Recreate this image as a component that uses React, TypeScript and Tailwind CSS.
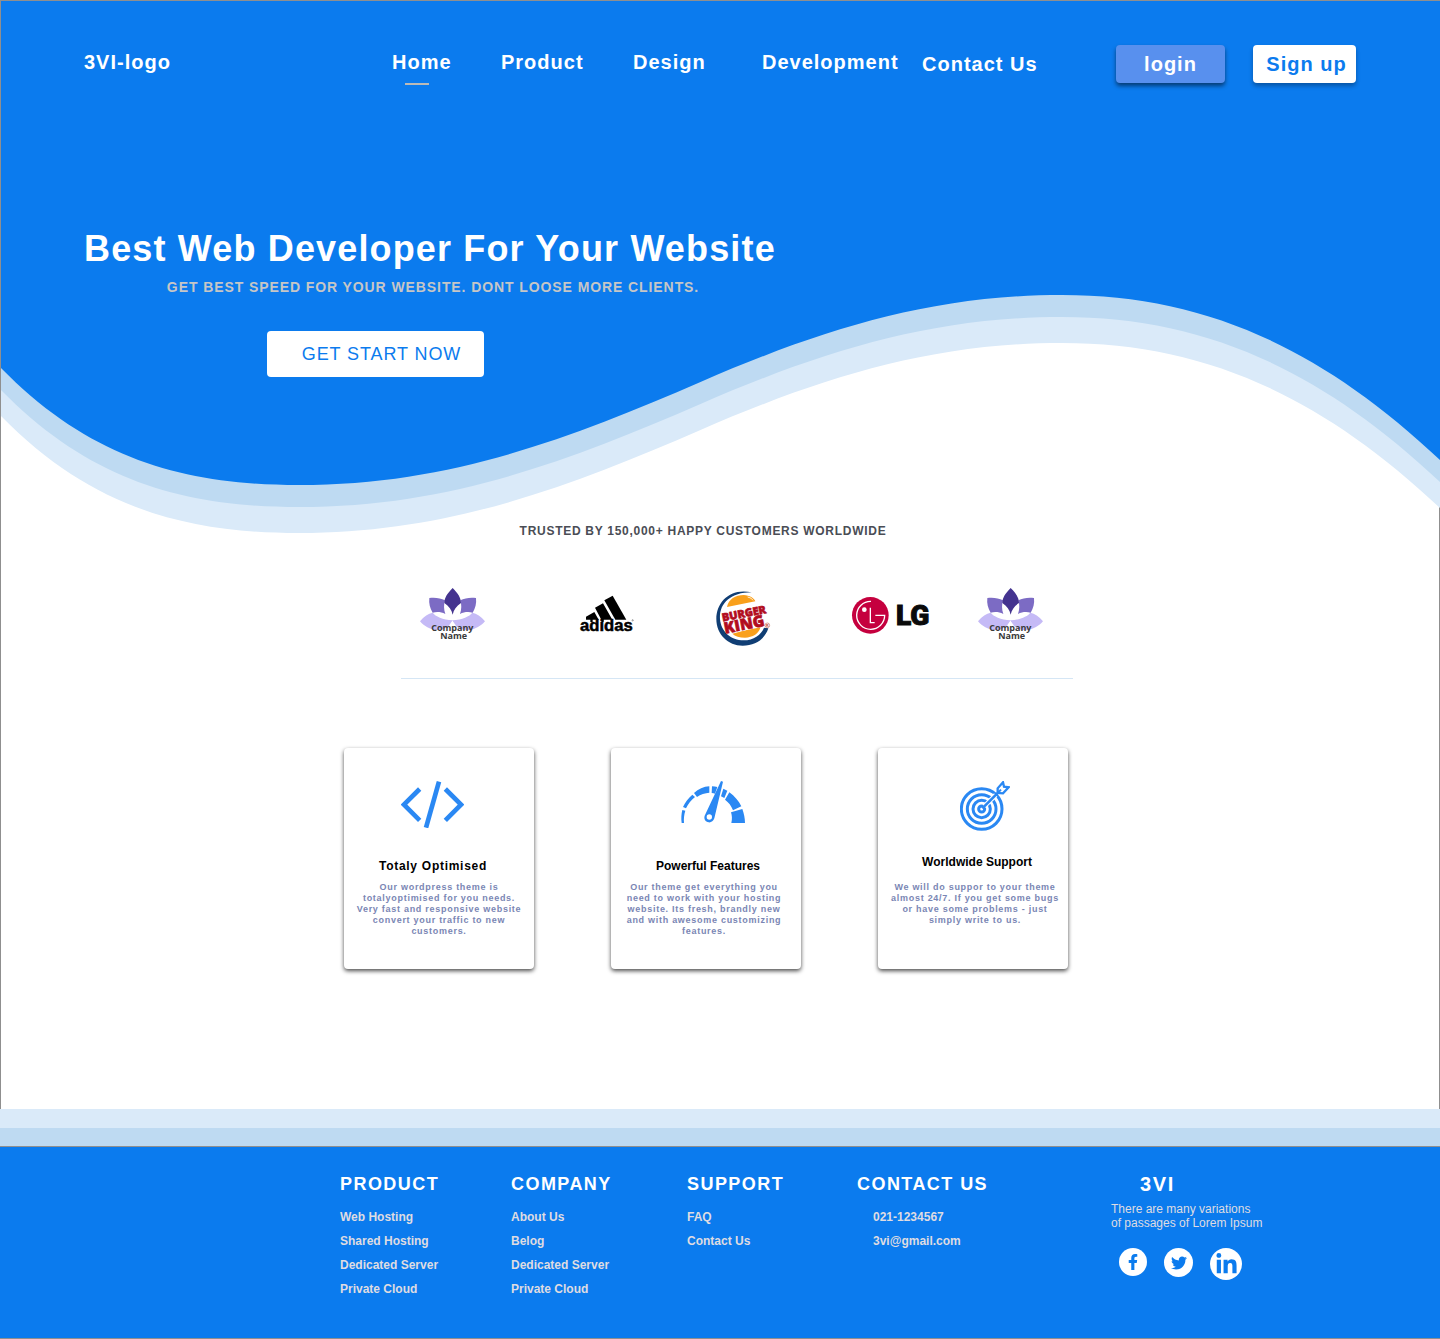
import type { ReactNode } from "react";
import { FaFacebookF, FaLinkedinIn, FaTwitter } from "react-icons/fa";

function HeroWave() {
  const curve =
    "C90 459 185 484 298 484 C450 484 570 437 700 381 C820 329 930 294 1062 294 C1200 294 1318 344 1440 459 V0 H0 Z";
  return (
    <svg
      className="pointer-events-none absolute inset-x-0 top-0 h-[540px] w-full"
      viewBox="0 0 1440 540"
      preserveAspectRatio="none"
      aria-hidden="true"
    >
      <path d={`M0 367 ${curve}`} fill="#daeaf9" transform="translate(0 48)" />
      <path d={`M0 367 ${curve}`} fill="#bedaf2" transform="translate(0 22)" />
      <path d={`M0 367 ${curve}`} fill="#0b7bee" />
      <rect width="1440" height="60" fill="#0b7bee" />
    </svg>
  );
}

function LotusLogo() {
  return (
    <svg className="h-[54px] w-[65px] overflow-visible" viewBox="60 54 195 162" role="img" aria-label="Company Name">
      <g fill="#c5baf6">
        <path d="M60 154C72 139 85 130 98 128C106 139 128 149 158 151C152 172 128 182 108 180C88 178 72 168 60 154Z" />
        <path d="M255 154C243 139 230 130 217 128C209 139 187 149 157 151C163 172 187 182 207 180C227 178 243 168 255 154Z" />
      </g>
      <g fill="#7c6bc4">
        <path d="M88 84C105 82 122 84 135 91C131 104 131 118 136 132C124 126 111 125 98 128C90 115 86 100 88 84Z" />
        <path d="M228 84C211 82 194 84 181 91C185 104 185 118 180 132C192 126 205 125 218 128C226 115 230 100 228 84Z" />
      </g>
      <path d="M158 54C142 70 133 84 133 99C147 108 155 120 158 134C161 120 169 108 183 99C183 84 174 70 158 54Z" fill="#44338f" />
      <path d="M157 152L146 168L157 163L169 168Z" fill="#fff" />
      <text fill="#3a3a3a" fontFamily="'Open Sans', 'Noto Sans', sans-serif" fontWeight="700" fontSize="27" textAnchor="middle">
        <tspan x="157" y="182">Company</tspan>
        <tspan x="161" y="206">Name</tspan>
      </text>
    </svg>
  );
}

function AdidasLogo() {
  return (
    <svg className="h-[40px] w-[54px] overflow-visible" viewBox="539 76 162 120" role="img" aria-label="adidas">
      <path d="M612 92L637 78L678 150H645Z" />
      <path d="M584 114L608 101L636 150H610V157H603V150Z" />
      <path d="M557 141L582 127L595 150H577V157H570V150H557Z" />
      <text
        x="618"
        y="185"
        fontFamily="'Liberation Sans', Arial, sans-serif"
        fontWeight="700"
        fontSize="50"
        textAnchor="middle"
        stroke="#000"
        strokeWidth="1.5"
      >
        adidas
      </text>
      <circle cx="697" cy="152" r="2" fill="none" stroke="#000" />
    </svg>
  );
}

function BurgerKingLogo() {
  return (
    <svg className="h-[55px] w-[54px] overflow-visible" viewBox="77 62 162 165" role="img" aria-label="Burger King">
      <path d="M184 66C118 52 78 96 78 146C78 192 113 226 157 226C195 226 224 206 234 174L221 172C212 194 190 210 160 210C122 210 92 184 89 146C86 102 118 66 184 66Z" fill="#103e74" />
      <path d="M110 110C114 86 136 74 160 74C178 75 191 83 195 93Z" fill="#f9a01b" />
      <path d="M172 80Q184 82 188 90" fill="none" stroke="#fff" strokeWidth="2.5" />
      <path d="M126 190L211 168C208 190 186 202 164 202C148 202 134 198 126 190Z" fill="#f9a01b" />
      <g fontFamily="'Open Sans', sans-serif" fontWeight="800" strokeLinejoin="round" transform="rotate(-11 100 153)">
        <rect x="100" y="126" width="110" height="66" fill="#fff" />
        <g fill="#b20d1e" stroke="#b20d1e" strokeWidth="2">
          <text x="97" y="153" fontSize="33">
            BURGER
          </text>
          <text x="97" y="190" fontSize="47">
            KING
          </text>
        </g>
      </g>
      <circle cx="231" cy="165" r="7" fill="none" stroke="#b8432f" strokeWidth="1.5" />
      <text x="231" y="169" fontSize="11" fontWeight="700" fontFamily="'Liberation Sans', sans-serif" textAnchor="middle" fill="#b8432f">
        R
      </text>
    </svg>
  );
}

function LgLogo() {
  return (
    <svg className="h-[37px] w-[79px] overflow-visible" viewBox="486 81 237 111" role="img" aria-label="LG">
      <circle cx="541" cy="136" r="55" fill="#c5003e" />
      <g fill="none" stroke="#fff" strokeWidth="4">
        <path d="M543 94A42 42 0 1 0 584 136H556" />
        <path d="M541 113V158H554" />
      </g>
      <circle cx="523" cy="119" r="7" fill="#fff" />
      <text x="618" y="166" fontFamily="Roboto, sans-serif" fontWeight="900" fontSize="84" fill="#0a0a0a" stroke="#0a0a0a" strokeWidth="3">
        LG
      </text>
    </svg>
  );
}

function CodeIcon() {
  return (
    <svg className="h-[47px] w-[63px]" viewBox="213 138 189 141" fill="none" stroke="#2a88f3" strokeWidth="14" aria-hidden="true">
      <path d="M269 162L222 209L269 256" />
      <path d="M346 162L393 209L346 256" />
      <path d="M327 140L288 278" />
    </svg>
  );
}

function GaugeIcon() {
  return (
    <svg className="h-[42px] w-[64px]" viewBox="243 138 192 126" fill="#2a88f3" aria-hidden="true">
      <path d="M245 264C243 249 244 237 247 225L256 227C252 239 251 252 252 264Z" />
      <path d="M249 216C255 202 265 189 277 179L285 186C273 195 264 207 258 220Z" />
      <path d="M282 174C295 162 311 155 328 154V173C315 174 302 178 291 186Z" />
      <path d="M336 154Q345 154 352 156L345 176Q341 174 335 174Z" />
      <path d="M370 161L382 167L373 189L363 184Z" />
      <path d="M388 172C404 183 416 198 424 214L399 226C394 212 386 202 375 194Z" />
      <path d="M427 222C432 236 435 250 435 264H394C397 251 396 242 393 232Z" />
      <path
        fillRule="evenodd"
        d="M363 138L369 140L343 250C340 259 333 263 326 262C316 260 311 252 314 242ZM328 238A8 8 0 1 0 328 254A8 8 0 1 0 328 238Z"
      />
    </svg>
  );
}

function TargetIcon() {
  return (
    <svg className="size-[50px]" viewBox="285 138 150 150" fill="none" stroke="#2a88f3" strokeWidth="9" aria-hidden="true">
      <circle cx="350" cy="222" r="61" />
      <circle cx="350" cy="222" r="43" />
      <circle cx="350" cy="222" r="26" />
      <circle cx="350" cy="222" r="9" />
      <path d="M358 214L392 180" stroke="#fff" strokeWidth="14" />
      <path d="M352 220L412 160" strokeWidth="8" />
      <path d="M398 174V160L414 142L417 155L431 157L414 175Z" strokeWidth="7" fill="#fff" />
      <path d="M398 174L408 164" strokeWidth="6" />
    </svg>
  );
}

interface Feature {
  title: string;
  lines: string[];
  icon: ReactNode;
  iconClass: string;
  titleClass: string;
  textClass: string;
}

const features: Feature[] = [
  {
    title: "Totaly Optimised",
    lines: [
      "Our wordpress theme is",
      "totalyoptimised for you needs.",
      "Very fast and responsive website",
      "convert your traffic to new",
      "customers.",
    ],
    icon: <CodeIcon />,
    iconClass: "pr-[14px]",
    titleClass: "mt-[27px] mb-2 pr-3 tracking-[0.06em]",
    textClass: "",
  },
  {
    title: "Powerful Features",
    lines: [
      "Our theme get everything you",
      "need to work with your hosting",
      "website. Its fresh, brandly new",
      "and with awesome customizing",
      "features.",
    ],
    icon: <GaugeIcon />,
    iconClass: "pl-[14px]",
    titleClass: "mt-[27px] mb-2 pl-1",
    textClass: "pr-1",
  },
  {
    title: "Worldwide Support",
    lines: [
      "We will do suppor to your theme",
      "almost 24/7. If you get some bugs",
      "or have some problems - just",
      "simply write to us.",
    ],
    icon: <TargetIcon />,
    iconClass: "pl-6",
    titleClass: "mt-[23px] mb-3 pl-2",
    textClass: "pl-1",
  },
];

function FeatureCard({ title, lines, icon, iconClass, titleClass, textClass }: Feature) {
  return (
    <article className="w-[190px] rounded-sm bg-white pt-[33px] pb-8 text-center whitespace-nowrap shadow-[0_2px_4px_rgba(0,0,0,0.7)]">
      <div className={`flex h-[50px] items-start justify-center ${iconClass}`}>{icon}</div>
      <h2 className={`text-xs leading-4 font-bold text-black ${titleClass}`}>{title}</h2>
      <p className={`text-[9px] leading-[11px] font-bold tracking-[0.08em] text-[#7a86b4] ${textClass}`}>
        {lines.map((line) => (
          <span key={line} className="block">
            {line}
          </span>
        ))}
      </p>
    </article>
  );
}

const footerColumns = [
  { title: "PRODUCT", links: ["Web Hosting", "Shared Hosting", "Dedicated Server", "Private Cloud"], listClass: "" },
  { title: "COMPANY", links: ["About Us", "Belog", "Dedicated Server", "Private Cloud"], listClass: "" },
  { title: "SUPPORT", links: ["FAQ", "Contact Us"], listClass: "" },
  { title: "CONTACT US", links: ["021-1234567", "3vi@gmail.com"], listClass: "pl-4" },
];

function Header() {
  return (
    <header className="relative grid grid-cols-[308fr_530fr_434fr] items-start pt-11 pr-[84px] pl-[83px] text-xl leading-6 font-bold tracking-wider whitespace-nowrap text-white">
      <a href="#" className="pt-[5px]">
        3VI-logo
      </a>
      <nav className="grid grid-cols-[109fr_132fr_129fr_160fr] pt-[5px]">
        <a href="#home">
          Home
          <span className="mt-[9px] ml-[13px] block h-0.5 w-6 bg-[#bdbab6]" />
        </a>
        <a href="#product">Product</a>
        <a href="#design">Design</a>
        <a href="#development">Development</a>
      </nav>
      <div className="grid grid-cols-[194fr_137fr_103fr] items-center">
        <a href="#contact">Contact Us</a>
        <button
          type="button"
          className="h-[38px] w-[109px] rounded-sm bg-[#5890ee] tracking-wider shadow-[0_3px_4px_rgba(0,0,0,0.5)]"
        >
          login
        </button>
        <button
          type="button"
          className="h-[38px] rounded-sm bg-white pl-1 tracking-wider text-[#0b7bee] shadow-[0_3px_4px_rgba(0,0,0,0.3)]"
        >
          Sign up
        </button>
      </div>
    </header>
  );
}

export default function App() {
  return (
    <div className="bg-white font-['Liberation_Sans',Arial,sans-serif]">
      <main className="relative border-t border-l border-[#8f8f8f]">
        <HeroWave />
        <Header />

        <section className="relative mt-[142px] pb-[103px] pl-[83px] whitespace-nowrap">
          <div className="w-[698px]">
            <h1 className="text-4xl leading-[44px] font-bold tracking-[0.032em] text-white">
              Best Web Developer For Your Website
            </h1>
            <p className="mt-[6px] text-center text-sm leading-5 font-bold tracking-[0.065em] text-[#c6c6c6]">
              GET BEST SPEED FOR YOUR WEBSITE. DONT LOOSE MORE CLIENTS.
            </p>
            <button
              type="button"
              className="mt-[34px] ml-[183px] block h-[46px] w-[217px] rounded-sm bg-white pl-3 text-lg tracking-wider text-[#0b7bee]"
            >
              GET START NOW
            </button>
          </div>
        </section>

        <div className="border-r border-[#8f8f8f] pt-[43px] pb-[140px]">
          <section className="relative" aria-label="Customers">
            <p className="pr-[34px] text-center text-xs leading-4 font-bold tracking-[0.06em] text-[#4a4d55]">
              TRUSTED BY 150,000+ HAPPY CUSTOMERS WORLDWIDE
            </p>
            <div className="mt-[49px] grid h-[57px] grid-cols-[419fr_160fr_136fr_136fr_126fr_461fr]">
              <span />
              <LotusLogo />
              <div className="pt-[7px]">
                <AdidasLogo />
              </div>
              <div className="pt-[3px]">
                <BurgerKingLogo />
              </div>
              <div className="pt-[9px]">
                <LgLogo />
              </div>
              <LotusLogo />
            </div>
            <div className="mt-[33px] grid grid-cols-[400fr_672fr_366fr]">
              <hr className="col-start-2 h-px border-0 bg-[#d5e6f5]" />
            </div>
          </section>

          <section className="mt-[69px] grid grid-cols-[343fr_267fr_267fr_561fr]" aria-label="Features">
            <span />
            {features.map((feature) => (
              <FeatureCard key={feature.title} {...feature} />
            ))}
          </section>
        </div>
      </main>

      <div className="h-[19px] bg-[#daeaf9]" />
      <div className="h-[18px] bg-[#bedaf2]" />

      <footer className="grid grid-cols-[340fr_171fr_176fr_170fr_254fr_329fr] border-y border-[#8f8f8f] bg-[#0b7bee] pt-[25px] pb-[37px] whitespace-nowrap text-white">
        <span />
        {footerColumns.map(({ title, links, listClass }) => (
          <section key={title}>
            <h2 className="text-lg leading-6 font-bold tracking-[0.08em]">{title}</h2>
            <ul className={`mt-[9px] text-xs leading-6 font-bold text-[#dfdce2] ${listClass}`}>
              {links.map((link) => (
                <li key={link}>
                  <a href="#">{link}</a>
                </li>
              ))}
            </ul>
          </section>
        ))}
        <section>
          <h2 className="pl-[29px] text-xl leading-6 font-bold tracking-[0.08em]">3VI</h2>
          <p className="mt-[6px] text-xs leading-[14px] text-[#dfdce2]">
            There are many variations
            <br />
            of passages of Lorem Ipsum
          </p>
          <div className="mt-[18px] flex items-start gap-[17px] pl-2 text-[#0b7bee]">
            <a href="#" aria-label="Facebook" className="flex size-7 items-center justify-center rounded-full bg-white">
              <FaFacebookF size={16} />
            </a>
            <a href="#" aria-label="Twitter" className="flex size-[29px] items-center justify-center rounded-full bg-white">
              <FaTwitter size={16} />
            </a>
            <a href="#" aria-label="LinkedIn" className="flex size-8 items-center justify-center rounded-full bg-white">
              <FaLinkedinIn size={23} />
            </a>
          </div>
        </section>
      </footer>
    </div>
  );
}
